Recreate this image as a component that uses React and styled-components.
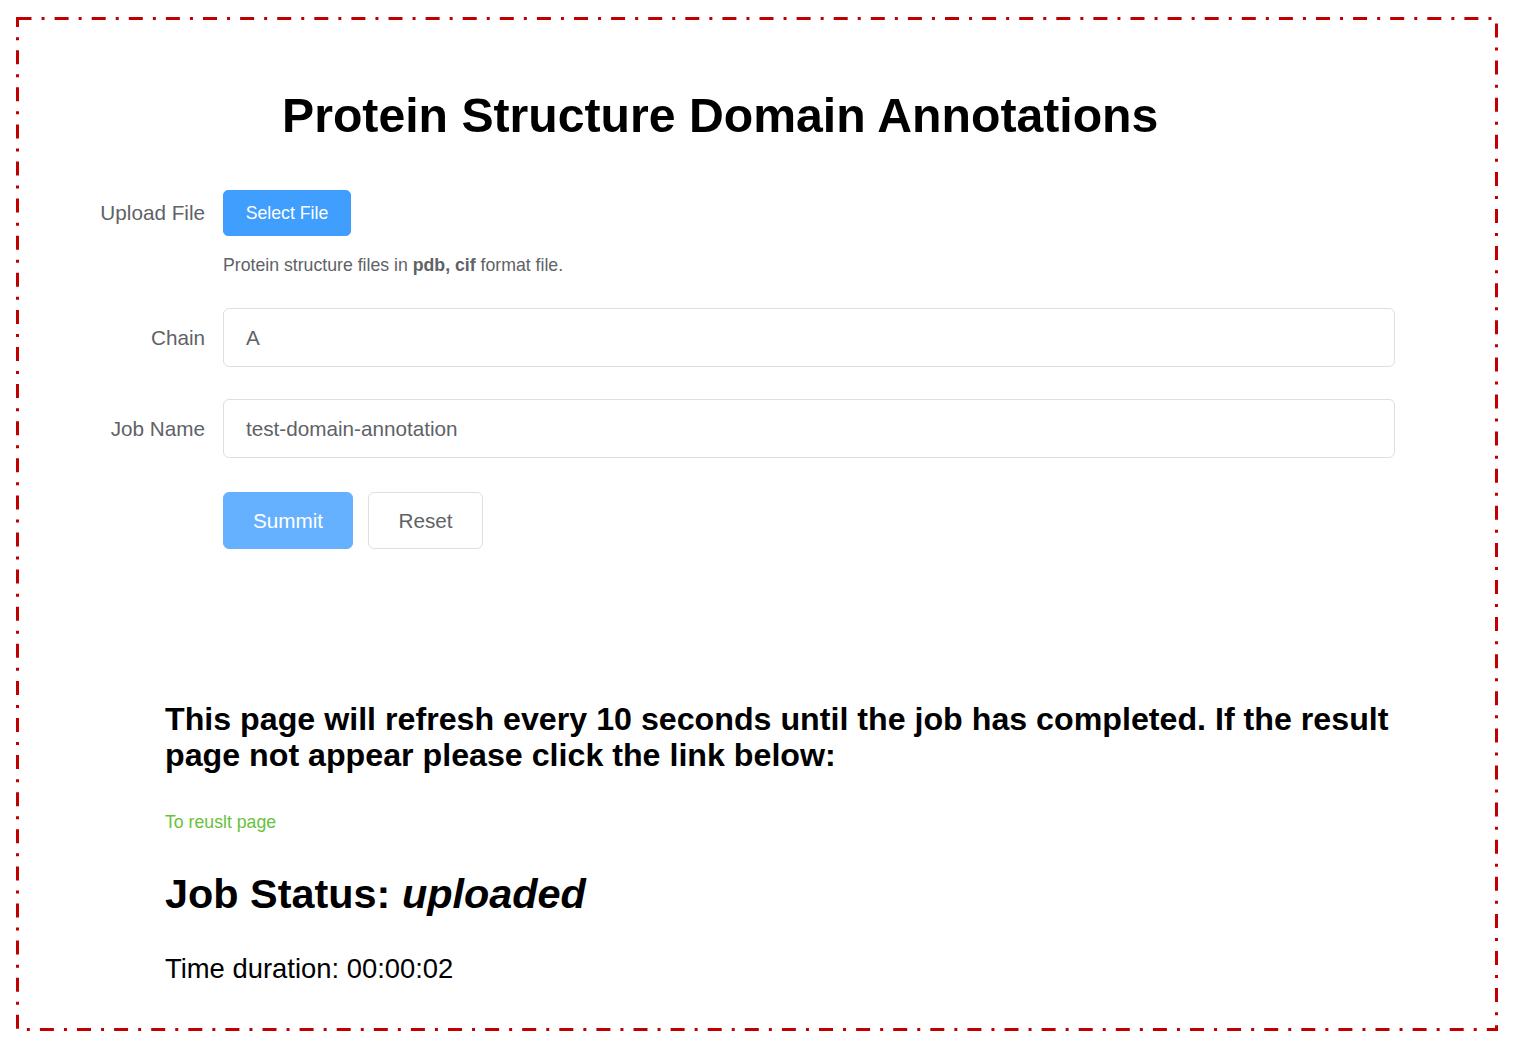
import styled, { createGlobalStyle } from 'styled-components';

const GlobalStyle = createGlobalStyle`
  body {
    margin: 0;
    background: #fff;
    font-family: "Liberation Sans", Arial, sans-serif;
  }
`;

// dash-dot outline drawn over the frame
function DashFrame() {
  return (
    <FrameLine width="1482" height="1014" viewBox="0 0 1482 1014">
      <rect
        x="1.5"
        y="1.5"
        width="1479"
        height="1011"
        fill="none"
        stroke="#c00000"
        strokeWidth="3"
        strokeDasharray="14 10.05 3 10.05"
      />
    </FrameLine>
  );
}

function App() {
  return (
    <>
      <GlobalStyle />
      <Frame>
        <DashFrame />
        <Title>Protein Structure Domain Annotations</Title>

        <Form>
          <FormItem $gap={31}>
            <Label $h={46}>Upload File</Label>
            <div>
              <SelectButton>Select File</SelectButton>
              <Tip>
                Protein structure files in <b>pdb, cif</b> format file.
              </Tip>
            </div>
          </FormItem>

          <FormItem $gap={32}>
            <Label $h={59}>Chain</Label>
            <Input defaultValue="A" />
          </FormItem>

          <FormItem $gap={34}>
            <Label $h={59}>Job Name</Label>
            <Input defaultValue="test-domain-annotation" />
          </FormItem>

          <FormItem $gap={0}>
            <Label $h={57} />
            <ButtonRow>
              <Button $primary>Summit</Button>
              <Button>Reset</Button>
            </ButtonRow>
          </FormItem>
        </Form>

        <Result>
          <Notice>
            This page will refresh every 10 seconds until the job has completed. If the result
            page not appear please click the link below:
          </Notice>
          <ResultLink href="#">To reuslt page</ResultLink>
          <Status>
            Job Status: <i>uploaded</i>
          </Status>
          <Duration>Time duration: 00:00:02</Duration>
        </Result>
      </Frame>
    </>
  );
}
export default App;

const Frame = styled.div`
  position: relative;
  box-sizing: border-box;
  width: 1482px;
  height: 1014px;
  margin: 17px 0 0 16px;
  padding-top: 70px;
`;

const FrameLine = styled.svg`
  position: absolute;
  left: 0;
  top: 0;
  pointer-events: none;
`;

const Title = styled.h1`
  margin: 0 0 47px;
  padding-left: 266px;
  font-size: 48.2px;
  line-height: 56px;
  font-weight: 700;
  color: #000;
`;

const Form = styled.form`
  display: flex;
  flex-direction: column;
`;

const FormItem = styled.div`
  display: grid;
  grid-template-columns: 207px 1172px;
  align-items: start;
  margin-bottom: ${(p) => p.$gap}px;
`;

const Label = styled.label`
  box-sizing: border-box;
  padding-right: 18px;
  text-align: right;
  font-size: 20.7px;
  line-height: ${(p) => p.$h}px;
  color: #606266;
`;

const SelectButton = styled.button`
  display: block;
  box-sizing: border-box;
  width: 128px;
  height: 46px;
  padding: 0;
  border: 1px solid #409eff;
  border-radius: 5px;
  background: #409eff;
  color: #fff;
  font-family: inherit;
  font-size: 17.7px;
`;

const Tip = styled.div`
  margin-top: 17px;
  font-size: 17.7px;
  line-height: 24px;
  color: #606266;

  b {
    font-weight: 700;
  }
`;

const Input = styled.input`
  box-sizing: border-box;
  width: 100%;
  height: 59px;
  padding: 0 22px;
  border: 1px solid #dcdfe6;
  border-radius: 6px;
  font-family: inherit;
  font-size: 20.7px;
  color: #606266;
  outline: none;
`;

const ButtonRow = styled.div`
  display: flex;
  gap: 15px;
`;

const Button = styled.button`
  box-sizing: border-box;
  width: ${(p) => (p.$primary ? 130 : 115)}px;
  height: 57px;
  padding: 0;
  border: 1px solid ${(p) => (p.$primary ? '#66b1ff' : '#dcdfe6')};
  border-radius: 6px;
  background: ${(p) => (p.$primary ? '#66b1ff' : '#fff')};
  color: ${(p) => (p.$primary ? '#fff' : '#606266')};
  font-family: inherit;
  font-size: 20.7px;
`;

const Result = styled.section`
  width: 1260px;
  margin: 152px 0 0 149px;
`;

const Notice = styled.h3`
  margin: 0 0 37px;
  font-size: 32.2px;
  line-height: 36px;
  font-weight: 700;
  color: #000;
`;

const ResultLink = styled.a`
  display: block;
  font-size: 17.7px;
  line-height: 24px;
  color: #67c23a;
  text-decoration: none;
`;

const Status = styled.h2`
  margin: 36px 0 35px;
  font-size: 41.4px;
  line-height: 48px;
  font-weight: 700;
  color: #000;
`;

const Duration = styled.p`
  margin: 0;
  font-size: 27.4px;
  line-height: 32px;
  color: #000;
`;
